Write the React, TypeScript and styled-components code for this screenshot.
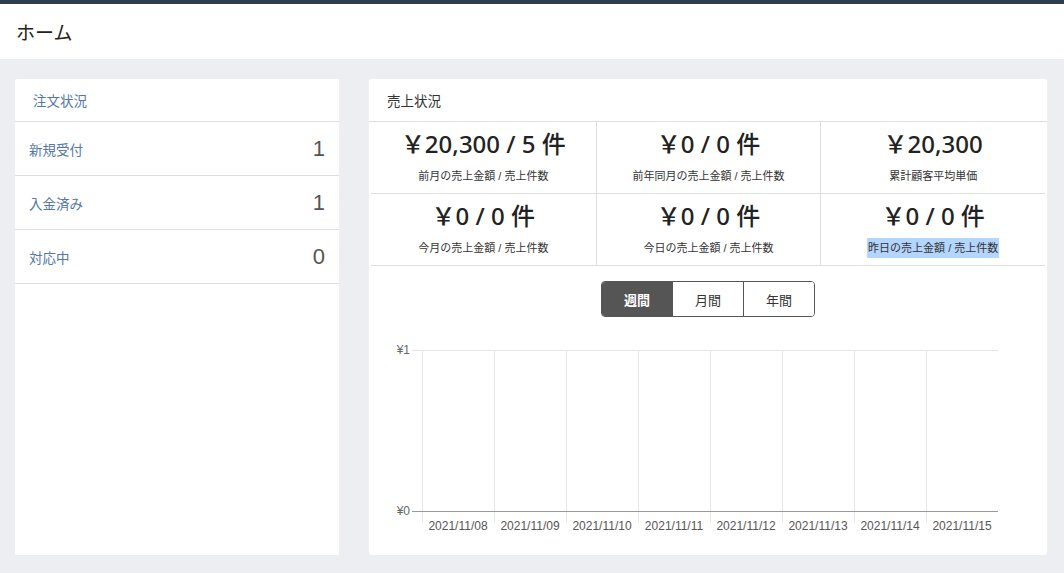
import React from "react"
import styled, {createGlobalStyle} from "styled-components"

const GlobalStyle = createGlobalStyle`
  html, body {
    margin: 0;
    padding: 0;
    background: #edeef2;
    font-family: "Liberation Sans", "Noto Sans CJK JP", sans-serif;
    color: #333;
  }
`

type OrderRow = { label: string, count: number }
type Stat = { value: string, label: string, selected?: boolean }

const orders: OrderRow[] = [
    {label: "新規受付", count: 1},
    {label: "入金済み", count: 1},
    {label: "対応中", count: 0},
]

const stats: Stat[] = [
    {value: "￥20,300 / 5 件", label: "前月の売上金額 / 売上件数"},
    {value: "￥0 / 0 件", label: "前年同月の売上金額 / 売上件数"},
    {value: "￥20,300", label: "累計顧客平均単価"},
    {value: "￥0 / 0 件", label: "今月の売上金額 / 売上件数"},
    {value: "￥0 / 0 件", label: "今日の売上金額 / 売上件数"},
    {value: "￥0 / 0 件", label: "昨日の売上金額 / 売上件数", selected: true},
]

const periods = ["週間", "月間", "年間"]
const dates = ["2021/11/08", "2021/11/09", "2021/11/10", "2021/11/11", "2021/11/12", "2021/11/13", "2021/11/14", "2021/11/15"]

function SalesChart() {
    const left = 53
    const top = 19
    const bottom = 180
    const step = 72
    const right = left + step * dates.length
    return (
        <svg width="678" height="215" viewBox="0 0 678 215">
            {dates.map((_, i) => (
                <line key={i} x1={left + step * i + 0.5} y1={top} x2={left + step * i + 0.5} y2={191}
                      stroke="#e6e6e6" strokeWidth="1"/>
            ))}
            <line x1={43} y1={top + 0.5} x2={right} y2={top + 0.5} stroke="#e6e6e6"/>
            <line x1={43} y1={bottom + 0.5} x2={right} y2={bottom + 0.5} stroke="#9a9a9a"/>
            <text x={41} y={top + 4} textAnchor="end" fontSize="12" fill="#666"
                  fontFamily="Liberation Sans, Noto Sans CJK JP, sans-serif">¥1</text>
            <text x={41} y={bottom + 4} textAnchor="end" fontSize="12" fill="#666"
                  fontFamily="Liberation Sans, Noto Sans CJK JP, sans-serif">¥0</text>
            {dates.map((d, i) => (
                <text key={d} x={left + step * i + 36} y={199} textAnchor="middle" fontSize="12" fill="#555"
                      fontFamily="Liberation Sans, sans-serif">{d}</text>
            ))}
        </svg>
    )
}

export default function App() {
    return (
        <>
            <GlobalStyle/>
            <TopBar/>
            <Header>
                <PageTitle>ホーム</PageTitle>
            </Header>
            <Main>
                <OrderCard>
                    <OrderHeader>注文状況</OrderHeader>
                    {orders.map(o => (
                        <OrderItem key={o.label}>
                            <OrderLabel>{o.label}</OrderLabel>
                            <OrderCount>{o.count}</OrderCount>
                        </OrderItem>
                    ))}
                </OrderCard>
                <SalesCard>
                    <SalesHeader>売上状況</SalesHeader>
                    <StatGrid>
                        {stats.map((s, i) => (
                            <StatCell key={i} $col={i % 3}>
                                <StatValue>{s.value}</StatValue>
                                <StatLabel $selected={s.selected}>{s.label}</StatLabel>
                            </StatCell>
                        ))}
                    </StatGrid>
                    <ToggleGroup>
                        {periods.map((p, i) => (
                            <ToggleButton key={p} $active={i === 0}>{p}</ToggleButton>
                        ))}
                    </ToggleGroup>
                    <ChartWrap>
                        <SalesChart/>
                    </ChartWrap>
                </SalesCard>
            </Main>
        </>
    )
}

const TopBar = styled.div`
  height: 4px;
  background: #2f3d4c;
`
const Header = styled.div`
  height: 55px;
  background: #fff;
  display: flex;
  align-items: center;
  padding-left: 16px;
`
const PageTitle = styled.h1`
  margin: 0;
  font-size: 19px;
  font-weight: 400;
  color: #222;
`
const Main = styled.div`
  display: flex;
  gap: 30px;
  padding: 20px 17px 18px 15px;
`
const Card = styled.div`
  background: #fff;
  border-radius: 2px;
  height: 476px;
  box-sizing: border-box;
`
const OrderCard = styled(Card)`
  width: 324px;
  flex-shrink: 0;
`
const OrderHeader = styled.div`
  height: 42px;
  display: flex;
  align-items: center;
  padding-left: 18px;
  font-size: 13.5px;
  color: #5478aa;
  border-bottom: 1px solid #dedede;
`
const OrderItem = styled.div`
  height: 53px;
  display: flex;
  align-items: center;
  justify-content: space-between;
  padding: 0 14px;
  border-bottom: 1px solid #dedede;
`
const OrderLabel = styled.span`
  font-size: 13.5px;
  color: #5478aa;
`
const OrderCount = styled.span`
  font-size: 22px;
  color: #555;
`
const SalesCard = styled(Card)`
  flex: 1;
  display: flex;
  flex-direction: column;
`
const SalesHeader = styled.div`
  height: 42px;
  display: flex;
  align-items: center;
  padding-left: 18px;
  font-size: 13.5px;
  color: #333;
  border-bottom: 1px solid #dedede;
`
const StatGrid = styled.div`
  display: grid;
  grid-template-columns: repeat(3, 1fr);
  margin: 0 2px;
`
const StatCell = styled.div<{ $col: number }>`
  height: 71px;
  display: flex;
  flex-direction: column;
  align-items: center;
  border-bottom: 1px solid #dedede;
  border-left: ${p => p.$col > 0 ? "1px solid #dedede" : "none"};
`
const StatValue = styled.div`
  margin-top: 7px;
  font-family: "Noto Sans", "Noto Sans CJK JP", sans-serif;
  font-size: 24px;
  font-weight: 500;
  color: #222;
  line-height: 30px;
`
const StatLabel = styled.div<{ $selected?: boolean }>`
  margin-top: 7px;
  font-size: 11px;
  line-height: 20px;
  color: #333;
  padding: 0 1px;
  background: ${p => p.$selected ? "#b4d5fd" : "transparent"};
`
const ToggleGroup = styled.div`
  display: flex;
  align-self: center;
  margin-top: 15px;
  border: 1px solid #555;
  border-radius: 4px;
  overflow: hidden;
`
const ToggleButton = styled.div<{ $active?: boolean }>`
  width: 70px;
  height: 34px;
  display: flex;
  align-items: center;
  justify-content: center;
  font-size: 13px;
  font-weight: ${p => p.$active ? 700 : 400};
  color: ${p => p.$active ? "#fff" : "#333"};
  background: ${p => p.$active ? "#555" : "#fff"};

  & + & {
    border-left: 1px solid #555;
  }
`
const ChartWrap = styled.div`
  margin-top: 14px;
  display: flex;
`
